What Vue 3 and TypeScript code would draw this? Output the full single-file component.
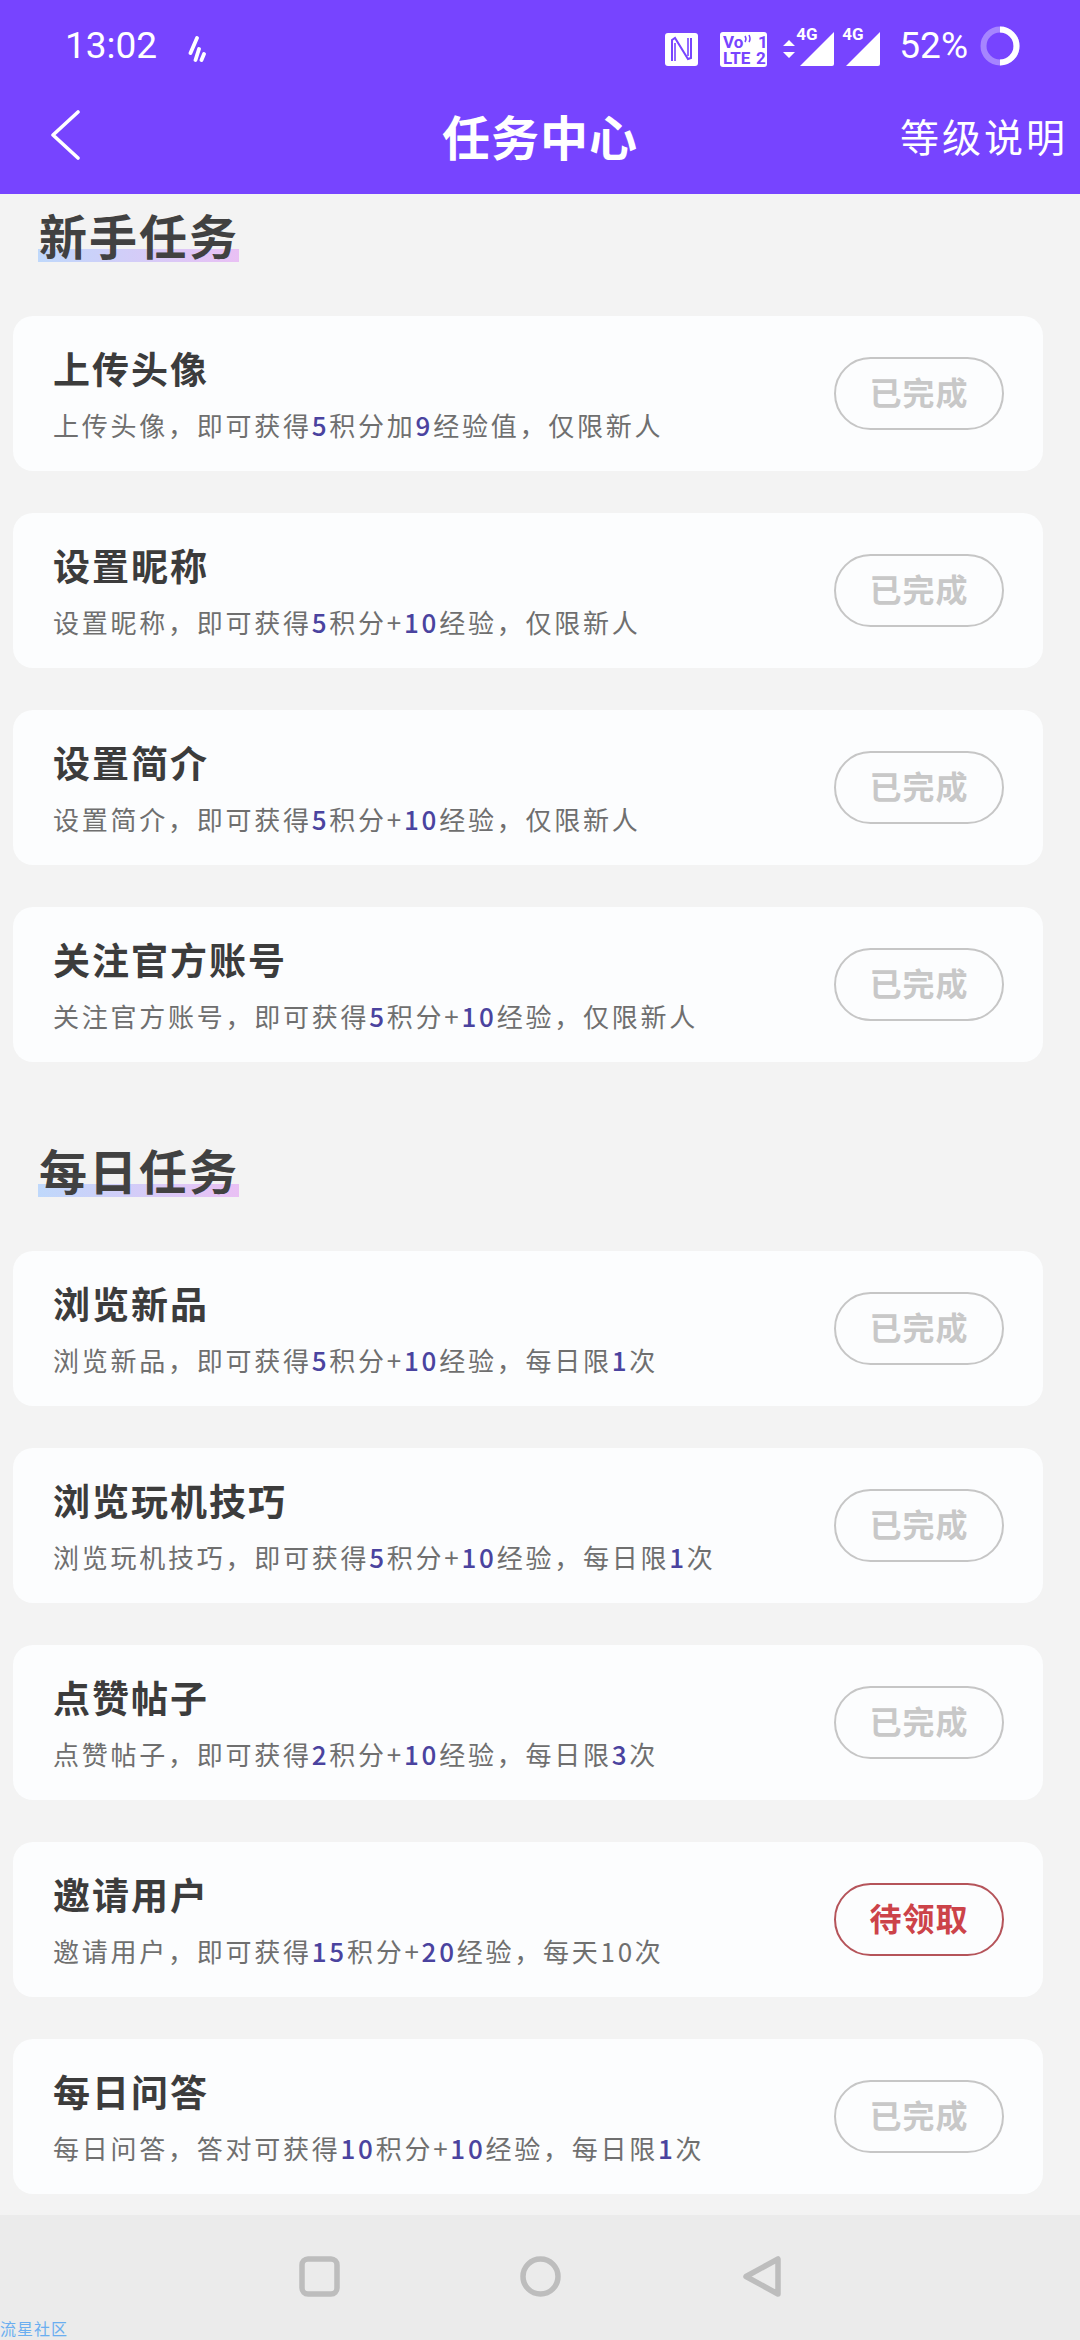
<script setup lang="ts">
interface Task { title: string; desc: string; pending?: boolean }
interface Section { name: string; tasks: Task[] }

const sections: Section[] = [
  {
    name: '新手任务',
    tasks: [
      { title: '上传头像', desc: '上传头像，即可获得[5]积分加[9]经验值，仅限新人' },
      { title: '设置昵称', desc: '设置昵称，即可获得[5]积分+[10]经验，仅限新人' },
      { title: '设置简介', desc: '设置简介，即可获得[5]积分+[10]经验，仅限新人' },
      { title: '关注官方账号', desc: '关注官方账号，即可获得[5]积分+[10]经验，仅限新人' },
    ],
  },
  {
    name: '每日任务',
    tasks: [
      { title: '浏览新品', desc: '浏览新品，即可获得[5]积分+[10]经验，每日限[1]次' },
      { title: '浏览玩机技巧', desc: '浏览玩机技巧，即可获得[5]积分+[10]经验，每日限[1]次' },
      { title: '点赞帖子', desc: '点赞帖子，即可获得[2]积分+[10]经验，每日限[3]次' },
      { title: '邀请用户', desc: '邀请用户，即可获得[15]积分+[20]经验，每天10次', pending: true },
      { title: '每日问答', desc: '每日问答，答对可获得[10]积分+[10]经验，每日限[1]次' },
    ],
  },
]

// Odd indexes of the split are the highlighted numbers.
const parts = (s: string): string[] => s.split(/\[|\]/)
</script>

<template>
  <div class="page">
    <header class="top">
      <div class="status">
        <span class="time">13:02</span>
        <svg class="flame" width="18" height="26" viewBox="0 0 18 26">
          <g fill="none" stroke="#fff" stroke-width="3.800" stroke-linecap="round">
            <path d="M9 2 2.500 17" />
            <path d="M7.500 24 11 13" />
            <path d="M13.500 24 16 18" />
          </g>
        </svg>
        <div class="spacer"></div>
        <svg class="ic-n" width="33" height="33" viewBox="0 0 33 33">
          <rect width="33" height="33" rx="3" fill="#fff" />
          <path d="M7 28V7l3-2 13 21 3-1V5" fill="none" stroke="#7744ff" stroke-width="2" />
          <path d="M10 28V10M23 23V5" fill="none" stroke="#7744ff" stroke-width="1.600" />
        </svg>
        <svg class="ic-vo" width="47" height="35" viewBox="0 0 47 35">
          <rect width="47" height="35" rx="3" fill="#fff" />
          <text x="3" y="16" class="vo-big">Vo</text>
          <text x="38" y="16" class="vo-big">1</text>
          <path d="M25 4q2 3 0 6M29 3q2 4 0 7" fill="none" stroke="#7744ff" stroke-width="1.500" />
          <text x="3" y="32" class="vo-big">LTE</text>
          <text x="36" y="32" class="vo-big">2</text>
        </svg>
        <svg class="ic-arrows" width="14" height="26" viewBox="0 0 14 26">
          <path d="M7 4l6 6H1zM7 22l6-6H1z" fill="#fff" />
        </svg>
        <div class="signal first">
          <svg width="36" height="36" viewBox="0 0 36 36"><path d="M35 1v32a2 2 0 0 1-2 2H1z" fill="#fff" /></svg>
          <span class="g4">4G</span>
        </div>
        <div class="signal">
          <svg width="36" height="36" viewBox="0 0 36 36"><path d="M35 1v32a2 2 0 0 1-2 2H1z" fill="#fff" /></svg>
          <span class="g4">4G</span>
        </div>
        <span class="batt">52%</span>
        <svg class="ring" width="40" height="40" viewBox="0 0 40 40">
          <circle cx="20" cy="20" r="16.500" fill="none" stroke="#fff" stroke-opacity=".35" stroke-width="6" />
          <path d="M20 3.500a16.500 16.500 0 0 1 0 33" fill="none" stroke="#fff" stroke-width="6" />
        </svg>
      </div>
      <div class="bar">
        <svg class="back" width="30" height="50" viewBox="0 0 30 50">
          <path d="M28 2 3 25l25 23" fill="none" stroke="#fff" stroke-width="3.600" stroke-linecap="round" stroke-linejoin="round" />
        </svg>
        <h1 class="title">任务中心</h1>
        <span class="levels">等级说明</span>
      </div>
    </header>

    <main class="content">
      <section v-for="sec in sections" :key="sec.name" class="section">
        <h2 class="sec-title"><span class="sec-text">{{ sec.name }}</span></h2>
        <div class="list">
          <article v-for="t in sec.tasks" :key="t.title" class="card">
            <div class="info">
              <h3 class="t-name">{{ t.title }}</h3>
              <p class="t-desc">
                <template v-for="(p, i) in parts(t.desc)" :key="i">
                  <b v-if="i % 2" class="num">{{ p }}</b>
                  <template v-else>{{ p }}</template>
                </template>
              </p>
            </div>
            <div class="btn" :class="{ pending: t.pending }">{{ t.pending ? '待领取' : '已完成' }}</div>
          </article>
        </div>
      </section>
    </main>

    <footer class="nav">
      <svg width="41" height="41" viewBox="0 0 41 41"><rect x="3" y="3" width="35" height="35" rx="6" fill="none" stroke="#bdbdbd" stroke-width="5.500" /></svg>
      <svg width="41" height="41" viewBox="0 0 41 41"><circle cx="20.500" cy="20.500" r="17.500" fill="none" stroke="#bdbdbd" stroke-width="5.500" /></svg>
      <svg width="41" height="41" viewBox="0 0 41 41"><path d="M37 3v35L5 20.500z" fill="none" stroke="#bdbdbd" stroke-width="5.500" stroke-linejoin="round" /></svg>
      <span class="mark">流星社区</span>
    </footer>
  </div>
</template>

<style scoped>
.page {
  position: relative;
  width: 1080px;
  height: 2340px;
  display: flex;
  flex-direction: column;
  overflow: hidden;
  background: #f3f3f3;
  font-family: "Noto Sans CJK SC", "Noto Sans", sans-serif;
}
.top {
  height: 194px;
  flex: none;
  background: #7744ff;
  color: #fff;
}
.status {
  height: 88px;
  display: flex;
  align-items: center;
  padding: 4px 60px 0 65px;
  box-sizing: border-box;
}
.time, .batt {
  font-family: Roboto, sans-serif;
  font-size: 37px;
  line-height: 42px;
}
.flame { margin-left: 31px; margin-top: 6px; }
.spacer { flex: 1; }
.ic-n { margin-top: 7px; }
.ic-vo { margin-left: 22px; margin-top: 6px; }
.vo-big {
  font-family: Roboto, sans-serif;
  font-size: 17px;
  font-weight: 700;
  fill: #7744ff;
}
.ic-arrows { margin-left: 15px; margin-top: 6px; }
.signal {
  position: relative;
  width: 36px;
  height: 36px;
  margin-left: 10px;
  margin-top: 5px;
}
.signal.first { margin-left: 3px; }
.signal svg { display: block; }
.g4 {
  position: absolute;
  left: -3px;
  top: -7px;
  font-family: Roboto, sans-serif;
  font-size: 17px;
  line-height: 20px;
  font-weight: 700;
}
.batt { margin-left: 18px; }
.ring { margin-left: 12px; }
.bar {
  height: 106px;
  box-sizing: border-box;
  display: grid;
  grid-template-columns: 1fr auto 1fr;
  align-items: center;
  padding: 0 12px 13px;
}
.back { display: block; margin-left: 38px; }
.title {
  margin: 0;
  font-size: 48px;
  line-height: 60px;
  font-weight: 700;
  letter-spacing: 1px;
}
.levels {
  justify-self: end;
  font-size: 39px;
  line-height: 50px;
  letter-spacing: 3px;
}
.content {
  flex: 1;
  min-height: 0;
  padding: 18px 37px 0 13px;
  overflow: hidden;
}
.section + .section { margin-top: 85px; }
.sec-title {
  margin: 0 0 54px;
  padding-left: 25px;
  font-size: 48px;
  line-height: 44px;
  font-weight: 700;
  color: #414141;
}
.sec-text {
  display: inline-block;
  padding: 0 0 6px 1px;
  letter-spacing: 2px;
  background: linear-gradient(90deg, #bfd8fb, #e9c0f4) no-repeat left bottom / 100% 13px;
}
.list {
  display: flex;
  flex-direction: column;
  gap: 42px;
}
.card {
  height: 155px;
  box-sizing: border-box;
  display: flex;
  align-items: center;
  justify-content: space-between;
  padding: 0 39px 0 40px;
  background: #fcfdfe;
  border-radius: 20px;
}
.t-name {
  margin: -2px 0 0;
  font-size: 37px;
  line-height: 50px;
  font-weight: 700;
  letter-spacing: 2px;
  color: #3c3c3c;
}
.t-desc {
  margin: 14px 0 0;
  font-size: 26px;
  line-height: 36px;
  letter-spacing: 2.750px;
  color: #6f6f6f;
  white-space: nowrap;
}
.num {
  color: #4a439f;
  font-weight: 500;
}
.btn {
  width: 170px;
  height: 73px;
  box-sizing: border-box;
  display: flex;
  align-items: center;
  justify-content: center;
  padding-bottom: 5px;
  border: 2px solid #c6c6c6;
  border-radius: 37px;
  font-size: 32px;
  font-weight: 700;
  letter-spacing: 1px;
  color: #c8c8c8;
}
.btn.pending {
  border-color: #b5545a;
  color: #cc4349;
}
.nav {
  position: relative;
  height: 125px;
  flex: none;
  display: flex;
  align-items: flex-start;
  justify-content: center;
  gap: 180px;
  padding-top: 41px;
  box-sizing: border-box;
  background: #ebebeb;
}
.nav svg { display: block; }
.mark {
  position: absolute;
  left: 0;
  bottom: 0;
  font-size: 16px;
  line-height: 23px;
  letter-spacing: 1px;
  color: #6aaef0;
}
</style>
